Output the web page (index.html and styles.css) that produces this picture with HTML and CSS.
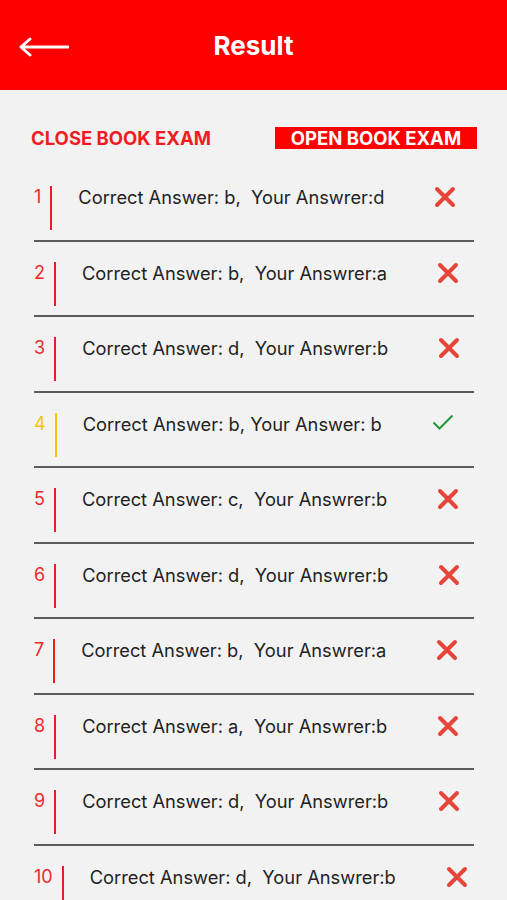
FILE: index.html
```html
<!DOCTYPE html>
<html>

<head>
    <title>Result</title>
    <link rel="stylesheet" href="styles.css">
</head>

<body>
    <div class="header">
        <svg class="back" width="50" height="20" viewBox="0 0 50 20">
            <path d="M11 2 L2 10 L11 18 M2 10 H49" fill="none" stroke="#fff" stroke-width="3" stroke-linecap="round" stroke-linejoin="round" />
        </svg>
        <span class="title">Result</span>
    </div>

    <div class="tabs">
        <span class="tab">CLOSE BOOK EXAM</span>
        <span class="tab active">OPEN BOOK EXAM</span>
    </div>

    <div class="list" id="resultList"></div>

    <script>
        var results = [
            ["b", "d"], ["b", "a"], ["d", "b"], ["b", "b"], ["c", "b"],
            ["d", "b"], ["b", "a"], ["a", "b"], ["d", "b"], ["d", "b"]
        ];

        var cross = '<svg width="22" height="22" viewBox="0 0 22 22"><path d="M3 3 L19 19 M19 3 L3 19" stroke="#e8453a" stroke-width="4" stroke-linecap="round" /></svg>';
        var tick = '<svg width="22" height="18" viewBox="0 0 22 18"><path d="M1.5 9.5 L7.5 15.5 L20.5 2.5" fill="none" stroke="#23963a" stroke-width="2" /></svg>';

        var list = document.getElementById("resultList");
        results.forEach(function (r, i) {
            var ok = r[0] == r[1];
            var text = ok ? "Correct Answer: " + r[0] + ", Your Answer: " + r[1]
                : "Correct Answer: " + r[0] + ",  Your Answrer:" + r[1];
            var row = document.createElement("div");
            row.className = ok ? "row right" : "row";
            row.innerHTML = '<span class="num">' + (i + 1) + '</span>' +
                '<span class="bar"></span>' +
                '<span class="text">' + text + '</span>' +
                '<span class="icon">' + (ok ? tick : cross) + '</span>';
            list.appendChild(row);
        });
    </script>
</body>

</html>
```

FILE: styles.css
```css
body {
    margin: 0;
    background: #f2f2f2;
    font-family: Inter, "Liberation Sans", sans-serif;
    color: #222;
}

.header {
    height: 90px;
    background: #ff0000;
    display: flex;
    align-items: center;
    justify-content: center;
    position: relative;
}

.back {
    position: absolute;
    left: 19px;
    top: 37px;
}

.title {
    color: #fff;
    font-size: 26px;
    font-weight: 700;
}

.tabs {
    height: 76px;
    box-sizing: border-box;
    display: flex;
    align-items: flex-start;
    justify-content: space-between;
    padding: 37px 30px 0 31px;
}

.tab {
    color: #f01c24;
    font-size: 18.5px;
    font-weight: 700;
    line-height: 22px;
}

.tab.active {
    background: #ff0000;
    color: #fff;
    width: 202px;
    text-align: center;
}

.list {
    margin: 0 33px 0 34px;
}

.row {
    display: flex;
    align-items: flex-start;
    padding: 20px 0 9.5px;
    border-bottom: 2px solid #5c5c5c;
}

.num {
    color: #ee2a2a;
    font-size: 18px;
    line-height: 22px;
}

.bar {
    width: 2px;
    height: 44px;
    background: #ee1c24;
    margin-left: 9px;
    margin-right: 26px;
}

.right .num {
    color: #f5c400;
}

.right .bar {
    background: #f5c400;
}

.text {
    font-size: 18.3px;
    line-height: 22px;
    white-space: pre;
}

.icon {
    margin-left: 50px;
    display: flex;
}
```
